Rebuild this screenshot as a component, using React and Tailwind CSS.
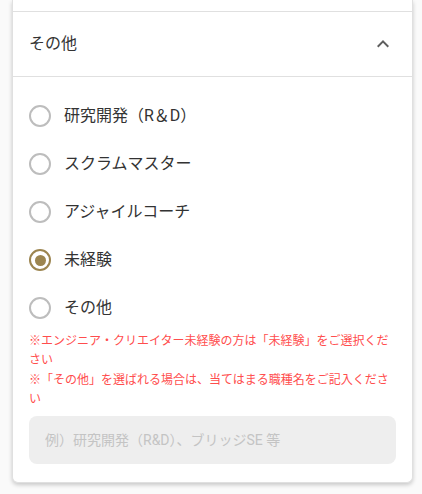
import { useState } from "react";

const options = ["研究開発（R＆D）", "スクラムマスター", "アジャイルコーチ", "未経験", "その他"];

function Radio({ label, checked, onSelect }) {
  return (
    <label className="flex h-12 cursor-pointer items-center gap-[13px]" onClick={onSelect}>
      <span
        className={`flex size-[22px] shrink-0 items-center justify-center rounded-full border-2 ${checked ? "border-[#9c8550]" : "border-[#bdbdbd]"}`}
      >
        {checked && <span className="size-[11px] rounded-full bg-[#9c8550]" />}
      </span>
      <span className="text-base text-[#333333]">{label}</span>
    </label>
  );
}

export default function App() {
  const [value, setValue] = useState("未経験");

  return (
    <div className="min-h-[494px] bg-[#fafafa] font-['Roboto','Noto_Sans_CJK_JP',sans-serif]">
      <div className="ml-3 w-[401px] overflow-hidden rounded-b-md border-x border-b border-[#e0e0e0] bg-white shadow-[0_2px_4px_rgba(0,0,0,0.2)]">
        <div className="h-[12px] border-b border-[#e0e0e0]" />

        <div className="flex h-[65px] items-center justify-between border-b border-[#e0e0e0] pl-4 pr-[17px]">
          <span className="text-base text-[#333333]">その他</span>
          <svg viewBox="0 0 24 24" className="size-6 fill-[#5f5f5f]">
            <path d="M12 8l-6 6 1.41 1.41L12 10.83l4.59 4.58L18 14z" />
          </svg>
        </div>

        <div className="px-4 pb-[18px] pt-[15px]">
          {options.map((o) => (
            <Radio key={o} label={o} checked={value === o} onSelect={() => setValue(o)} />
          ))}
          <p className="text-xs leading-[19.4px] text-[#ff4d4d]">
            ※エンジニア・クリエイター未経験の方は「未経験」をご選択ください
          </p>
          <p className="text-xs leading-[19.4px] text-[#ff4d4d]">
            ※「その他」を選ばれる場合は、当てはまる職種名をご記入ください
          </p>
          <input
            type="text"
            placeholder="例）研究開発（R&D）、ブリッジSE 等"
            className="mt-[6px] h-12 w-full rounded-lg bg-[#eeeeee] px-4 text-sm text-[#333333] outline-none placeholder:text-[#c4c4c4]"
          />
        </div>
      </div>
    </div>
  );
}
